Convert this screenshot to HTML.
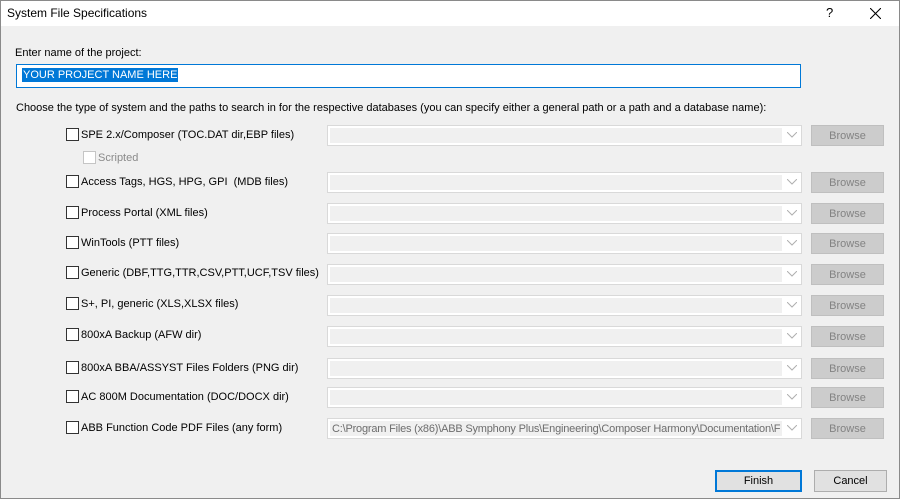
<!DOCTYPE html>
<html><head><style>
*{box-sizing:border-box;margin:0;padding:0}
body{width:900px;height:499px;background:#f0f0f0;font-family:"Liberation Sans",sans-serif;font-size:11px;color:#000;position:relative;overflow:hidden}
.frame{position:absolute;left:0;top:0;width:900px;height:499px;border:1px solid #8a8a8a}
.title{position:absolute;left:1px;top:1px;width:898px;height:25px;background:#fff}
.t{position:absolute;white-space:nowrap}
.l{margin-top:2px}
.cb{position:absolute;width:13px;height:13px;border:1px solid #333;background:#fff}
.cbd{border-color:#c5c5c5}
.combo{position:absolute;left:327px;width:475px;height:21px;border:1px solid #d9d9d9;background:#fff}
.combo .in{position:absolute;left:2px;top:2px;width:452px;height:15px;background:#f0f0f0}
.combo svg{position:absolute;right:4px;top:6px}
.br{position:absolute;left:811px;width:73px;height:21px;background:#cccccc;border:1px solid #bfbfbf;color:#838383;text-align:center;line-height:20px}
.btn{position:absolute;height:22px;background:#e1e1e1;border:1px solid #adadad;text-align:center;line-height:21px}
</style></head><body>
<div class="frame"></div>
<div class="title"></div>
<div class="t" style="left:7px;top:6px;font-size:12px">System File Specifications</div>
<div class="t" style="left:826px;top:5px;font-size:13px">?</div>
<svg style="position:absolute;left:870px;top:8px" width="11" height="11"><path d="M0 0L11 11M11 0L0 11" stroke="#000" stroke-width="1.1"/></svg>
<div class="t" style="left:15px;top:47px">Enter name of the project:</div>
<div style="position:absolute;left:16px;top:64px;width:785px;height:24px;border:1px solid #0078d7;background:#fff"></div>
<div class="t" style="left:22px;top:68px;background:#0078d7;color:#fff;padding:0 1px;line-height:14px">YOUR PROJECT NAME HERE</div>
<div class="t" style="left:16px;top:102px">Choose the type of system and the paths to search in for the respective databases (you can specify either a general path or a path and a database name):</div>

<div class="cb" style="left:66px;top:128px"></div><div class="t l" style="left:81px;top:127px">SPE 2.x/Composer (TOC.DAT dir,EBP files)</div>
<div class="combo" style="top:125px"><div class="in"></div><svg width="10" height="6"><path d="M0 0L5 5L10 0" fill="none" stroke="#b0b0b0"/></svg></div><div class="br" style="top:125px">Browse</div>
<div class="cb cbd" style="left:83px;top:151px"></div><div class="t l" style="left:98px;top:150px;color:#8a8a8a">Scripted</div>

<div class="cb" style="left:66px;top:175px"></div><div class="t l" style="left:81px;top:174px">Access Tags, HGS, HPG, GPI &nbsp;(MDB files)</div>
<div class="combo" style="top:172px"><div class="in"></div><svg width="10" height="6"><path d="M0 0L5 5L10 0" fill="none" stroke="#b0b0b0"/></svg></div><div class="br" style="top:172px">Browse</div>

<div class="cb" style="left:66px;top:206px"></div><div class="t l" style="left:81px;top:205px">Process Portal (XML files)</div>
<div class="combo" style="top:203px"><div class="in"></div><svg width="10" height="6"><path d="M0 0L5 5L10 0" fill="none" stroke="#b0b0b0"/></svg></div><div class="br" style="top:203px">Browse</div>

<div class="cb" style="left:66px;top:236px"></div><div class="t l" style="left:81px;top:235px">WinTools (PTT files)</div>
<div class="combo" style="top:233px"><div class="in"></div><svg width="10" height="6"><path d="M0 0L5 5L10 0" fill="none" stroke="#b0b0b0"/></svg></div><div class="br" style="top:233px">Browse</div>

<div class="cb" style="left:66px;top:266px"></div><div class="t l" style="left:81px;top:265px">Generic (DBF,TTG,TTR,CSV,PTT,UCF,TSV files)</div>
<div class="combo" style="top:264px"><div class="in"></div><svg width="10" height="6"><path d="M0 0L5 5L10 0" fill="none" stroke="#b0b0b0"/></svg></div><div class="br" style="top:264px">Browse</div>

<div class="cb" style="left:66px;top:297px"></div><div class="t l" style="left:81px;top:296px">S+, PI, generic (XLS,XLSX files)</div>
<div class="combo" style="top:295px"><div class="in"></div><svg width="10" height="6"><path d="M0 0L5 5L10 0" fill="none" stroke="#b0b0b0"/></svg></div><div class="br" style="top:295px">Browse</div>

<div class="cb" style="left:66px;top:328px"></div><div class="t l" style="left:81px;top:327px">800xA Backup (AFW dir)</div>
<div class="combo" style="top:326px"><div class="in"></div><svg width="10" height="6"><path d="M0 0L5 5L10 0" fill="none" stroke="#b0b0b0"/></svg></div><div class="br" style="top:326px">Browse</div>

<div class="cb" style="left:66px;top:361px"></div><div class="t l" style="left:81px;top:360px">800xA BBA/ASSYST Files Folders (PNG dir)</div>
<div class="combo" style="top:358px"><div class="in"></div><svg width="10" height="6"><path d="M0 0L5 5L10 0" fill="none" stroke="#b0b0b0"/></svg></div><div class="br" style="top:358px">Browse</div>

<div class="cb" style="left:66px;top:390px"></div><div class="t l" style="left:81px;top:389px">AC 800M Documentation (DOC/DOCX dir)</div>
<div class="combo" style="top:387px"><div class="in"></div><svg width="10" height="6"><path d="M0 0L5 5L10 0" fill="none" stroke="#b0b0b0"/></svg></div><div class="br" style="top:387px">Browse</div>

<div class="cb" style="left:66px;top:421px"></div><div class="t l" style="left:81px;top:420px">ABB Function Code PDF Files (any form)</div>
<div class="combo" style="top:418px"><div class="in" style="overflow:hidden;color:#6d6d6d;line-height:16px;padding-left:2px;white-space:nowrap;letter-spacing:-0.2px">C:\Program Files (x86)\ABB Symphony Plus\Engineering\Composer Harmony\Documentation\F</div><svg width="10" height="6"><path d="M0 0L5 5L10 0" fill="none" stroke="#b0b0b0"/></svg></div><div class="br" style="top:418px">Browse</div>

<div class="btn" style="left:715px;top:470px;width:87px;border:2px solid #0078d7;line-height:19px">Finish</div>
<div class="btn" style="left:814px;top:470px;width:73px">Cancel</div>
</body></html>
